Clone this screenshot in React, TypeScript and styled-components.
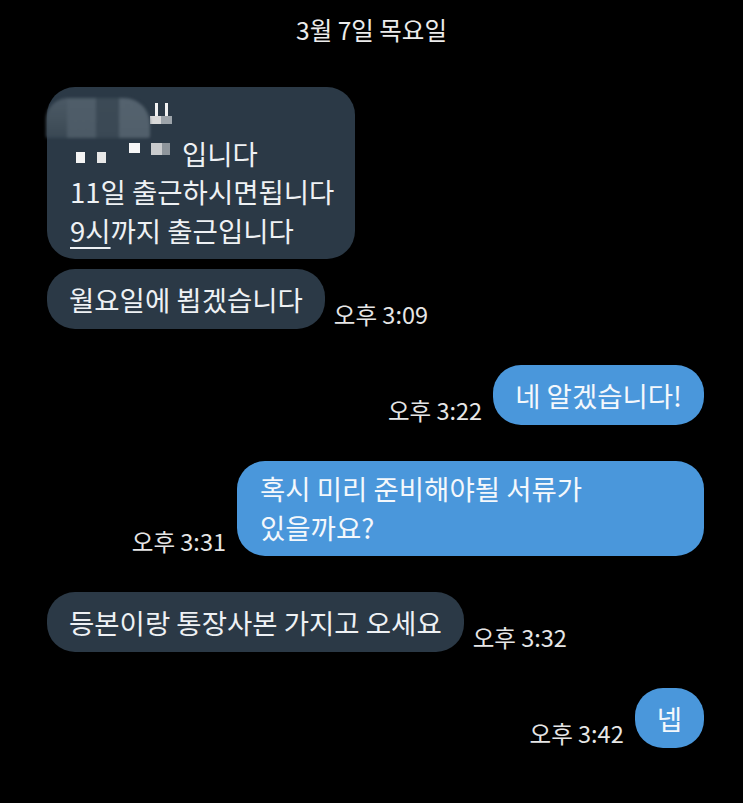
import React from "react";
import styled, { createGlobalStyle } from "styled-components";

const GlobalStyle = createGlobalStyle`
  html, body {
    margin: 0;
    padding: 0;
    background: #000;
  }
  body {
    font-family: "Noto Sans CJK KR", "Noto Sans", sans-serif;
    color: #eef1f4;
    -webkit-font-smoothing: antialiased;
  }
`;

const Screen = styled.div`
  width: 743px;
  height: 803px;
  background: #000;
  overflow: hidden;
  display: flex;
  flex-direction: column;
  padding-top: 14px;
  box-sizing: border-box;
`;

const DateHeader = styled.div`
  text-align: center;
  font-size: 24.5px;
  line-height: 32px;
  color: #ececec;
`;

const Messages = styled.div`
  display: flex;
  flex-direction: column;
  padding: 41px 39px 0 47px;
`;

const Row = styled.div<{ $mine?: boolean; $grouped?: boolean }>`
  display: flex;
  align-items: flex-end;
  justify-content: ${(p) => (p.$mine ? "flex-end" : "flex-start")};
  gap: ${(p) => (p.$mine ? 11 : 9)}px;
  margin-top: ${(p) => (p.$grouped ? 10 : 36)}px;
  &:first-child {
    margin-top: 0;
  }
`;

const Bubble = styled.div<{ $mine?: boolean; $width?: number }>`
  box-sizing: border-box;
  ${(p) => (p.$width ? `width: ${p.$width}px;` : "")}
  min-height: 60px;
  min-width: 64px;
  display: flex;
  flex-direction: column;
  justify-content: center;
  align-items: ${(p) => (p.$width ? "flex-start" : "center")};
  padding: ${(p) => (p.$width ? "8px 23px 10px" : "0 22px")};
  border-radius: 28px;
  background: ${(p) => (p.$mine ? "#4a97db" : "#2b3946")};
  color: ${(p) => (p.$mine ? "#f4f8fc" : "#eef1f4")};
  font-size: 27.5px;
  line-height: 38.5px;
  white-space: nowrap;
`;

const Line = styled.div`
  display: flex;
  align-items: flex-start;
  height: 38.5px;
`;

const Underlined = styled.span`
  text-decoration: underline;
  text-decoration-thickness: 2px;
  text-underline-offset: 5px;
`;

const Time = styled.span`
  font-size: 23.5px;
  line-height: 28px;
  color: #e6e6e6;
  margin-bottom: 1px;
  white-space: nowrap;
`;

/* redacted (mosaic) pieces of the first message */
const MosaicLine = styled.div`
  display: flex;
  align-items: flex-end;
  height: 38.5px;
  margin-left: -24px;
`;

const Blob = styled.span`
  display: block;
  width: 104px;
  height: 40px;
  margin-bottom: -4px;
  border-radius: 22px 26px 2px 2px;
  background:
    linear-gradient(90deg, rgba(0,0,0,0) 0 20%, rgba(80,94,106,0.8) 20% 48%, rgba(58,72,84,0.9) 48% 70%, rgba(86,100,112,0.8) 70% 100%),
    linear-gradient(180deg, #4b5965 0%, #43515c 55%, #394753 100%);
  filter: blur(1.5px);
`;

const Mark = styled.span`
  display: flex;
  flex-direction: column;
  align-items: center;
  width: 22px;
  margin-bottom: 10px;
`;

const MarkBars = styled.span`
  display: flex;
  gap: 7px;
`;

const Bar = styled.span`
  display: block;
  width: 3px;
  height: 13px;
  background: #f2f2f2;
`;

const MarkBase = styled.span`
  display: block;
  width: 22px;
  height: 8px;
  background: linear-gradient(90deg, #d8d8d8 0 50%, #9da4aa 50% 100%);
`;

const Pixel = styled.span<{ $w: number; $h: number; $top: number; $gap: number; $color: string }>`
  display: block;
  flex: none;
  width: ${(p) => p.$w}px;
  height: ${(p) => p.$h}px;
  margin-top: ${(p) => p.$top}px;
  margin-left: ${(p) => p.$gap}px;
  background: ${(p) => p.$color};
`;

const Covered = styled.span`
  margin-left: 12px;
`;

const RedactedHeader = () => (
  <>
    <MosaicLine>
      <Blob />
      <Mark>
        <MarkBars>
          <Bar />
          <Bar />
        </MarkBars>
        <MarkBase />
      </Mark>
    </MosaicLine>
    <Line>
      <Pixel $w={9} $h={11} $top={18} $gap={6} $color="#f4f4f4" />
      <Pixel $w={9} $h={11} $top={18} $gap={12} $color="#e8e8e8" />
      <Pixel $w={11} $h={10} $top={9} $gap={23} $color="#f6f6f6" />
      <Pixel $w={11} $h={12} $top={9} $gap={11} $color="#c9cbcd" />
      <Pixel $w={8} $h={12} $top={9} $gap={0} $color="#8e959b" />
      <Covered>입니다</Covered>
    </Line>
  </>
);

export default function App() {
  return (
    <Screen>
      <GlobalStyle />
      <DateHeader>3월 7일 목요일</DateHeader>
      <Messages>
        <Row>
          <Bubble $width={308}>
            <RedactedHeader />
            <Line>11일 출근하시면됩니다</Line>
            <Line>
              <Underlined>9시</Underlined>까지 출근입니다
            </Line>
          </Bubble>
        </Row>
        <Row $grouped>
          <Bubble>월요일에 뵙겠습니다</Bubble>
          <Time>오후 3:09</Time>
        </Row>
        <Row $mine>
          <Time>오후 3:22</Time>
          <Bubble $mine>네 알겠습니다!</Bubble>
        </Row>
        <Row $mine>
          <Time>오후 3:31</Time>
          <Bubble $mine $width={467}>
            <Line>혹시 미리 준비해야될 서류가</Line>
            <Line>있을까요?</Line>
          </Bubble>
        </Row>
        <Row>
          <Bubble>등본이랑 통장사본 가지고 오세요</Bubble>
          <Time>오후 3:32</Time>
        </Row>
        <Row $mine>
          <Time>오후 3:42</Time>
          <Bubble $mine>넵</Bubble>
        </Row>
      </Messages>
    </Screen>
  );
}
